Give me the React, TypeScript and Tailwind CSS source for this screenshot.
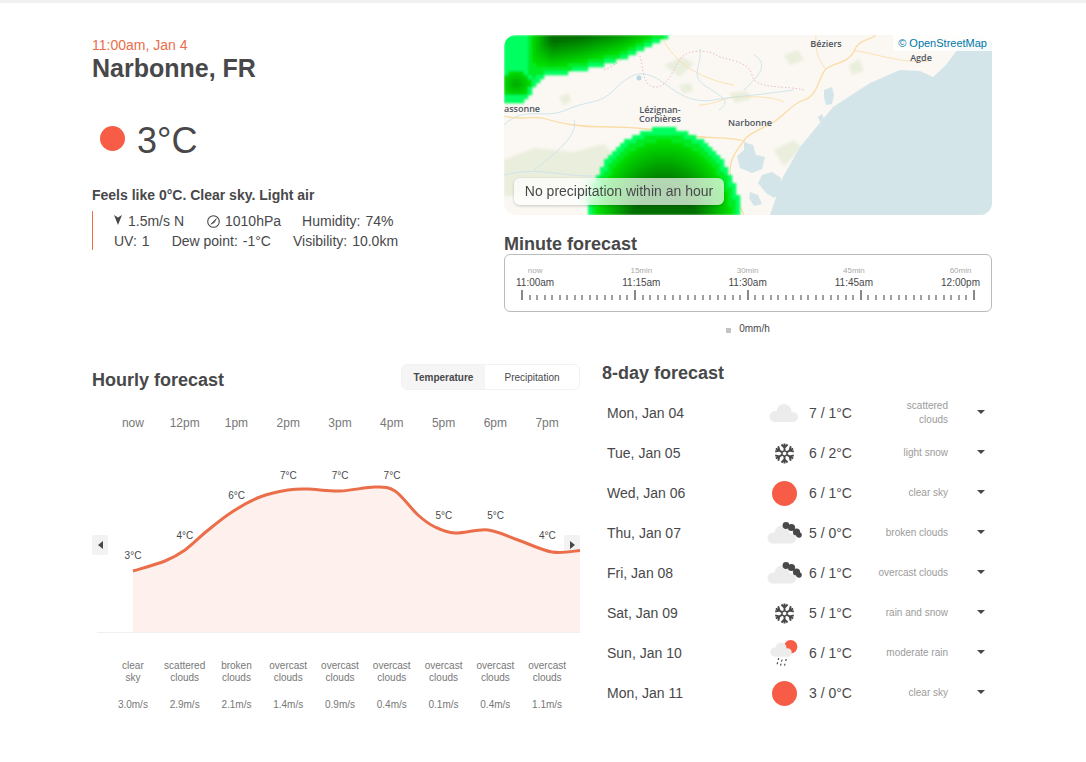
const hours = [
  { time: 'now', temp: '3°C', y: 119, desc: ['clear', 'sky'], wind: '3.0m/s' },
  { time: '12pm', temp: '4°C', y: 99, desc: ['scattered', 'clouds'], wind: '2.9m/s' },
  { time: '1pm', temp: '6°C', y: 59, desc: ['broken', 'clouds'], wind: '2.1m/s' },
  { time: '2pm', temp: '7°C', y: 39, desc: ['overcast', 'clouds'], wind: '1.4m/s' },
  { time: '3pm', temp: '7°C', y: 39, desc: ['overcast', 'clouds'], wind: '0.9m/s' },
  { time: '4pm', temp: '7°C', y: 39, desc: ['overcast', 'clouds'], wind: '0.4m/s' },
  { time: '5pm', temp: '5°C', y: 79, desc: ['overcast', 'clouds'], wind: '0.1m/s' },
  { time: '6pm', temp: '5°C', y: 79, desc: ['overcast', 'clouds'], wind: '0.4m/s' },
  { time: '7pm', temp: '4°C', y: 99, desc: ['overcast', 'clouds'], wind: '1.1m/s' },
];

const days = [
  { date: 'Mon, Jan 04', icon: 'cloud', temp: '7 / 1°C', desc: ['scattered', 'clouds'] },
  { date: 'Tue, Jan 05', icon: 'snow', temp: '6 / 2°C', desc: ['light snow'] },
  { date: 'Wed, Jan 06', icon: 'sun', temp: '6 / 1°C', desc: ['clear sky'] },
  { date: 'Thu, Jan 07', icon: 'clouds', temp: '5 / 0°C', desc: ['broken clouds'] },
  { date: 'Fri, Jan 08', icon: 'clouds', temp: '6 / 1°C', desc: ['overcast clouds'] },
  { date: 'Sat, Jan 09', icon: 'snow', temp: '5 / 1°C', desc: ['rain and snow'] },
  { date: 'Sun, Jan 10', icon: 'rain', temp: '6 / 1°C', desc: ['moderate rain'] },
  { date: 'Mon, Jan 11', icon: 'sun', temp: '3 / 0°C', desc: ['clear sky'] },
];

const minutes = [
  { label: 'now', time: '11:00am' },
  { label: '15min', time: '11:15am' },
  { label: '30min', time: '11:30am' },
  { label: '45min', time: '11:45am' },
  { label: '60min', time: '12:00pm' },
];

// chart coords, page minus (92, 440)
const curve: [number, number][] = [
  [41, 131], [73, 121], [93, 110], [115, 91], [140, 72], [168, 57], [196, 50], [216, 49],
  [248, 51], [283, 47], [303, 51], [326, 75], [343, 87], [363, 93], [396, 90], [426, 100],
  [460, 112], [488, 110.5],
];

function smooth(pts: [number, number][]) {
  let d = `M${pts[0][0]} ${pts[0][1]}`;
  for (let i = 0; i < pts.length - 1; i++) {
    const p0 = pts[Math.max(i - 1, 0)];
    const p1 = pts[i];
    const p2 = pts[i + 1];
    const p3 = pts[Math.min(i + 2, pts.length - 1)];
    d += ` C${p1[0] + (p2[0] - p0[0]) / 6} ${p1[1] + (p2[1] - p0[1]) / 6} ${p2[0] - (p3[0] - p1[0]) / 6} ${p2[1] - (p3[1] - p1[1]) / 6} ${p2[0]} ${p2[1]}`;
  }
  return d;
}

const clamp = (v: number) => Math.min(1, Math.max(0, v));

function radarColor(t: number) {
  if (t < 0.1) return 'rgb(0,255,96)';
  if (t < 0.22) return 'rgb(0,236,32)';
  return `rgb(0,${Math.round(226 - clamp((t - 0.22) / 0.78) * 116)},0)`;
}

// lower rim of the rain band in the top left corner
const rim: [number, number][] = [[0, 70], [18, 68], [26, 62], [33, 48], [40, 42], [80, 35], [117, 25], [140, 14], [170, 0]];

function rimY(x: number) {
  for (let i = 0; i < rim.length - 1; i++) {
    const [x0, y0] = rim[i];
    const [x1, y1] = rim[i + 1];
    if (x <= x1) return y0 + ((x - x0) / (x1 - x0)) * (y1 - y0);
  }
  return -1;
}

// precipitation depth at a map point, -1 when dry
function radarAt(x: number, y: number) {
  const bottom = 1 - Math.hypot((x - 160) / 78, (y - 190) / 97);
  if (bottom > 0) return clamp(bottom * 1.7);
  const depth = rimY(x) - y;
  if (depth <= 0) return -1;
  const core = 1 - Math.hypot((x - 12) / 15, (y - 49) / 13);
  if (core > 0) return 0.22 + core * 0.4;
  return clamp(depth / 34) * clamp((x - 22) / 26);
}

function radarCells() {
  const cells = [];
  for (let x = 0; x < 488; x += 4) {
    for (let y = 0; y < 180; y += 4) {
      const t = radarAt(x + 2, y + 2);
      if (t >= 0) cells.push(<rect key={`${x}-${y}`} x={x} y={y} width="4.3" height="4.3" fill={radarColor(t)} />);
    }
  }
  return cells;
}

function LightCloud({ x = 0, y = 0 }: { x?: number; y?: number }) {
  return (
    <g fill="#ececec" transform={`translate(${x} ${y})`}>
      <circle cx="15" cy="7.5" r="7.5" />
      <circle cx="6" cy="12.5" r="5.5" />
      <circle cx="24" cy="13" r="5" />
      <rect x="6" y="10" width="18" height="8" />
    </g>
  );
}

function Snowflake() {
  return (
    <svg width="21" height="21" viewBox="0 0 22 22" fill="none" stroke="#48484a" strokeWidth="2">
      {[0, 60, 120, 180, 240, 300].map((a) => (
        <g key={a} transform={`rotate(${a} 11 11)`}>
          <path d="M11 8V0.5M7.8 1.6L11 4.8 14.2 1.6" />
        </g>
      ))}
      <path d="M11 8L13.6 9.5V12.5L11 14 8.4 12.5V9.5Z" strokeWidth="1.6" />
    </svg>
  );
}

function DayIcon({ type }: { type: string }) {
  if (type === 'sun') return <div className="h-[25px] w-[25px] rounded-full bg-[#f65c46]" />;
  if (type === 'snow') return <Snowflake />;
  if (type === 'cloud') {
    return (
      <svg width="40" height="30" viewBox="0 0 40 30">
        <LightCloud x={5} y={6} />
      </svg>
    );
  }
  if (type === 'clouds') {
    return (
      <svg width="40" height="30" viewBox="0 0 40 30">
        <LightCloud x={3} y={7.5} />
        <g fill="#48484a">
          <circle cx="22" cy="7.5" r="3.4" />
          <circle cx="27.5" cy="9.5" r="3.6" />
          <circle cx="32.5" cy="14" r="3.6" />
          <circle cx="35" cy="17" r="2.8" />
        </g>
      </svg>
    );
  }
  return (
    <svg width="40" height="30" viewBox="0 0 40 30">
      <circle cx="26.7" cy="8.7" r="6.7" fill="#f65c46" />
      <g fill="#ececec">
        <circle cx="17" cy="10" r="5.5" />
        <circle cx="11" cy="14" r="4.6" />
        <circle cx="23.5" cy="14.5" r="4.2" />
        <rect x="11" y="12" width="12.5" height="6.7" />
      </g>
      <g stroke="#48484a" strokeWidth="1.1">
        <path d="M14.8 20L14 22M13.8 24.2L13 26.2M18.2 21.6L17.4 23.6M17.2 25.6L16.4 27.6M22.4 21L21.6 23M21.2 25.8L20.4 27.6" />
      </g>
    </svg>
  );
}

function PrecipMap() {
  return (
    <svg className="h-full w-full" viewBox="0 0 488 180">
      <defs>
        <filter id="soft" x="-5%" y="-5%" width="110%" height="110%">
          <feGaussianBlur stdDeviation="1.1" />
        </filter>
        <filter id="land" x="-20%" y="-20%" width="140%" height="140%">
          <feGaussianBlur stdDeviation="1.5" />
        </filter>
      </defs>
      <rect width="488" height="180" fill="#fbf8f3" />
      <g fill="#eaeedd" filter="url(#land)">
        <path d="M0 125l30-12 40 4 30-8 12 14-22 26-40 10-50 2z" />
        <path d="M160 30l18-8 12 6-14 14zM55 62l10-4 2 8-8 4zM280 20l14-5 6 10-14 5zM345 30l10-6 5 12-12 4zM175 50l12-2 2 8-10 3z" />
        <path d="M270 115l20-10 8 8-18 18zM225 58l18-2 4 8-16 4z" />
      </g>
      <path d="M266 180L279 142 296 112 329 72 366 48 396 35 416 36 429 42 442 30 453 15 462 8 488 6V180Z" fill="#d4e5e9" />
      <g fill="#d4e5e9">
        <path d="M240 107l9 3 3 10 9 2-3 12-10 4-12-5-3-12 7-6z" />
        <path d="M258 140l10-3 9 6 2 13-9 7-8-5-8-10z" />
        <path d="M246 157l8 3 4 9-8 2-5-8z" />
        <path d="M320 55l8-3 2 8-2 9-6 1-2-8z" />
        <path d="M314 82l4-3 2 5-4 3z" />
      </g>
      <g fill="none" stroke="#fbdca6" strokeWidth="1.3">
        <path d="M0 81C15 86 28 80 42 84S70 92 105 92 160 96 180 100 225 101 240 106C242 100 255 95 268 88S285 70 300 65 315 40 322 34 345 28 350 16 365 6 372 0" />
        <path d="M240 106C232 115 226 125 226 135S232 165 240 180" />
        <path d="M322 34C318 30 310 18 312 0M350 16C360 15 400 30 425 26M195 70C210 70 222 62 232 62S265 60 280 67M157 0C170 30 200 45 230 50" strokeWidth="0.8" />
      </g>
      <g fill="none" stroke="#cfe4ea" strokeWidth="1">
        <path d="M0 90C20 70 40 85 62 75S95 70 110 55 135 35 150 42 180 70 210 65 240 62 290 55 320 60" />
        <path d="M196 14C198 30 186 40 200 50S230 65 215 75M70 85C75 100 50 120 30 135M250 20C268 30 250 45 240 55" />
        <path d="M0 140C40 130 60 145 110 140" />
      </g>
      <g fill="none" stroke="#e8bcc6" strokeWidth="1" strokeDasharray="1.5 2">
        <path d="M100 35C115 30 125 15 133 18S135 50 150 52 170 30 178 22 205 15 212 20 245 25 248 40 280 50 300 55 320 58" />
      </g>
      <circle cx="135" cy="43" r="2.5" fill="#b9d6e2" />
      <g filter="url(#soft)">{radarCells()}</g>
      <g fill="#4f5562" fontSize="9" fontWeight="600" textAnchor="middle" style={{ fontFamily: "'Open Sans', sans-serif" }}>
        <text x="322" y="12">Béziers</text>
        <text x="417" y="26">Agde</text>
        <text x="18" y="77">assonne</text>
        <text x="156" y="77.5">Lézignan-</text>
        <text x="156" y="87">Corbières</text>
        <text x="246" y="91">Narbonne</text>
      </g>
    </svg>
  );
}

export default function App() {
  return (
    <div className="min-h-[762px] border-t-[3px] border-[#f0f0f0] bg-white pl-[92px] text-[#48484a] [font-family:'Liberation_Sans',Arial,sans-serif]">
      <div className="flex w-[900px] items-start pt-[32px]">
        <div className="w-[412px]">
          <div className="text-[14px] leading-[20px] text-[#eb6e4b]">11:00am, Jan 4</div>
          <h1 className="text-[25px] font-bold leading-[26px]">Narbonne, FR</h1>
          <div className="mt-[38px] flex h-[44px] items-center pl-[8px]">
            <div className="-mt-[6px] h-[25px] w-[25px] rounded-full bg-[#f65c46]" />
            <span className="ml-[12px] text-[36px] leading-[44px]">3°C</span>
          </div>
          <div className="mt-[22px] text-[14px] font-bold leading-[20px]">Feels like 0°C. Clear sky. Light air</div>
          <div className="mt-[6px] flex h-[39px] flex-col border-l border-[#eb6e4b] pl-[21px] text-[14px] leading-[20px]">
            <div className="flex items-center gap-[22px]">
              <span className="flex items-center gap-[6px]">
                <svg width="8" height="10" viewBox="0 0 8 10" className="-mt-[2px]">
                  <path d="M0 0L4 2.6 8 0 4 10Z" fill="#48484a" />
                </svg>
                1.5m/s N
              </span>
              <span className="flex items-center gap-[5px]">
                <svg width="13" height="13" viewBox="0 0 13 13" fill="none" stroke="#48484a" className="ml-[1px]">
                  <circle cx="6.5" cy="6.5" r="5.8" strokeWidth="1.1" />
                  <path d="M3.8 9.2L9.4 3.6 7.2 7.6Z" fill="#48484a" strokeWidth="0.7" />
                </svg>
                1010hPa
              </span>
              <span className="-ml-[1px] flex gap-[5px]">
                <span>Humidity:</span>
                <span>74%</span>
              </span>
            </div>
            <div className="flex gap-[22px]">
              <span className="flex gap-[5px]">
                <span>UV:</span>
                <span>1</span>
              </span>
              <span className="flex gap-[5px]">
                <span>Dew point:</span>
                <span>-1°C</span>
              </span>
              <span className="flex gap-[5px]">
                <span>Visibility:</span>
                <span>10.0km</span>
              </span>
            </div>
          </div>
        </div>

        <div className="w-[488px]">
          <div className="relative h-[180px] w-[488px] overflow-hidden rounded-[12px]">
            <PrecipMap />
            <div className="absolute right-0 top-0 bg-white/80 px-[5px] text-[11px] leading-[16px] text-[#0078a8]">© OpenStreetMap</div>
            <div className="absolute left-[10px] top-[143px] flex h-[27px] w-[210px] items-center justify-center rounded-[6px] bg-white/70 text-[14px] shadow-[0_1px_3px_rgba(0,0,0,0.2)] backdrop-blur-sm">
              No precipitation within an hour
            </div>
          </div>
          <h2 className="mt-[19px] text-[18px] font-bold leading-[21px]">Minute forecast</h2>
          <div className="-mt-[1px] h-[58px] rounded-[6px] border border-[#bbbbbb] px-[11px] pt-[11px]">
            <div className="flex justify-between">
              {minutes.map((m) => (
                <div key={m.time} className="flex flex-col items-center">
                  <span className="text-[8px] leading-[10px] text-[#aaaaaa]">{m.label}</span>
                  <span className="text-[10px] leading-[14px]">{m.time}</span>
                </div>
              ))}
            </div>
            <div className="mx-[5px] flex h-[10px] items-end justify-between">
              {Array.from({ length: 61 }, (_, i) => (
                <div key={i} className={i % 15 === 0 ? 'h-[10px] w-[2px] bg-[#888888]' : 'h-[5px] w-[2px] bg-[#a0a0a0]'} />
              ))}
            </div>
          </div>
          <div className="mt-[11px] flex items-center justify-center gap-[8px] text-[10px] leading-[12px]">
            <span className="mt-[2px] h-[5px] w-[5px] bg-[#c4c4c4]" />
            <span>0mm/h</span>
          </div>
        </div>
      </div>

      <div className="mt-[29px] flex w-[900px] items-start gap-[22px]">
        <div className="w-[488px]">
          <div className="flex h-[26px] items-center justify-between">
            <h2 className="mt-[3px] whitespace-nowrap pt-[3px] text-[18px] font-bold leading-[21px]">Hourly forecast</h2>
            <div className="flex h-[26px] w-[179px] overflow-hidden rounded-[6px] border border-[#f2f2f2] text-[10px]">
              <div className="flex w-[83px] items-center justify-center bg-[#f5f5f5] font-bold">Temperature</div>
              <div className="flex flex-1 items-center justify-center">Precipitation</div>
            </div>
          </div>
          <div className="relative mt-[24px]">
            <div className="ml-[15px] grid w-[466px] grid-cols-9 text-center text-[12px] leading-[18px] text-[#777777]">
              {hours.map((h) => (
                <span key={h.time}>{h.time}</span>
              ))}
            </div>
            <button className="absolute left-0 top-[121px] flex h-[20px] w-[16px] items-center justify-center rounded-[2px] bg-[#f2f2f2]">
              <svg width="5" height="8" viewBox="0 0 5 8"><path d="M5 0V8L0 4Z" fill="#48484a" /></svg>
            </button>
            <button className="absolute right-0 top-[121px] flex h-[20px] w-[16px] items-center justify-center rounded-[2px] bg-[#f2f2f2]">
              <svg width="5" height="8" viewBox="0 0 5 8"><path d="M0 0V8L5 4Z" fill="#48484a" /></svg>
            </button>
            <svg width="488" height="200" viewBox="0 0 488 200" className="relative mt-[8px] block">
              <path d={`${smooth(curve)} V192 H41 Z`} fill="#fdeeeb" fillOpacity="0.9" />
              <path d={smooth(curve)} fill="none" stroke="#eb6e4b" strokeWidth="3" />
              <line x1="5" x2="488" y1="192.5" y2="192.5" stroke="#f0f0f0" />
              {hours.map((h, i) => (
                <text key={h.time} x={41 + i * 51.8} y={h.y} textAnchor="middle" fontSize="10" fill="#48484a">
                  {h.temp}
                </text>
              ))}
            </svg>
            <div className="ml-[15px] mt-[20px] grid w-[466px] grid-cols-9 text-center text-[10px] leading-[12px] text-[#777777]">
              {hours.map((h, i) => (
                <span key={i}>
                  {h.desc[0]}
                  <br />
                  {h.desc[1]}
                </span>
              ))}
            </div>
            <div className="ml-[15px] mt-[15px] grid w-[466px] grid-cols-9 text-center text-[10px] leading-[12px] text-[#777777]">
              {hours.map((h, i) => (
                <span key={i}>{h.wind}</span>
              ))}
            </div>
          </div>
        </div>

        <div className="w-[390px]">
          <h2 className="-mt-[1px] text-[18px] font-bold leading-[21px]">8-day forecast</h2>
          <div className="mt-[9px]">
            {days.map((d) => (
              <div key={d.date} className="flex h-[40px] items-center">
                <span className="ml-[5px] w-[157px] text-[14px]">{d.date}</span>
                <span className="flex w-[40px] items-center justify-center">
                  <DayIcon type={d.icon} />
                </span>
                <span className="ml-[5px] w-[60px] text-[14px]">{d.temp}</span>
                <span className="w-[79px] text-right text-[10px] leading-[14px] text-[#9b9b9b]">
                  {d.desc.map((t) => (
                    <span key={t} className="block">{t}</span>
                  ))}
                </span>
                <svg width="8" height="4" viewBox="0 0 8 4" className="-mt-[2px] ml-[29px]">
                  <path d="M0 0H8L4 4Z" fill="#48484a" />
                </svg>
              </div>
            ))}
          </div>
        </div>
      </div>
    </div>
  );
}
